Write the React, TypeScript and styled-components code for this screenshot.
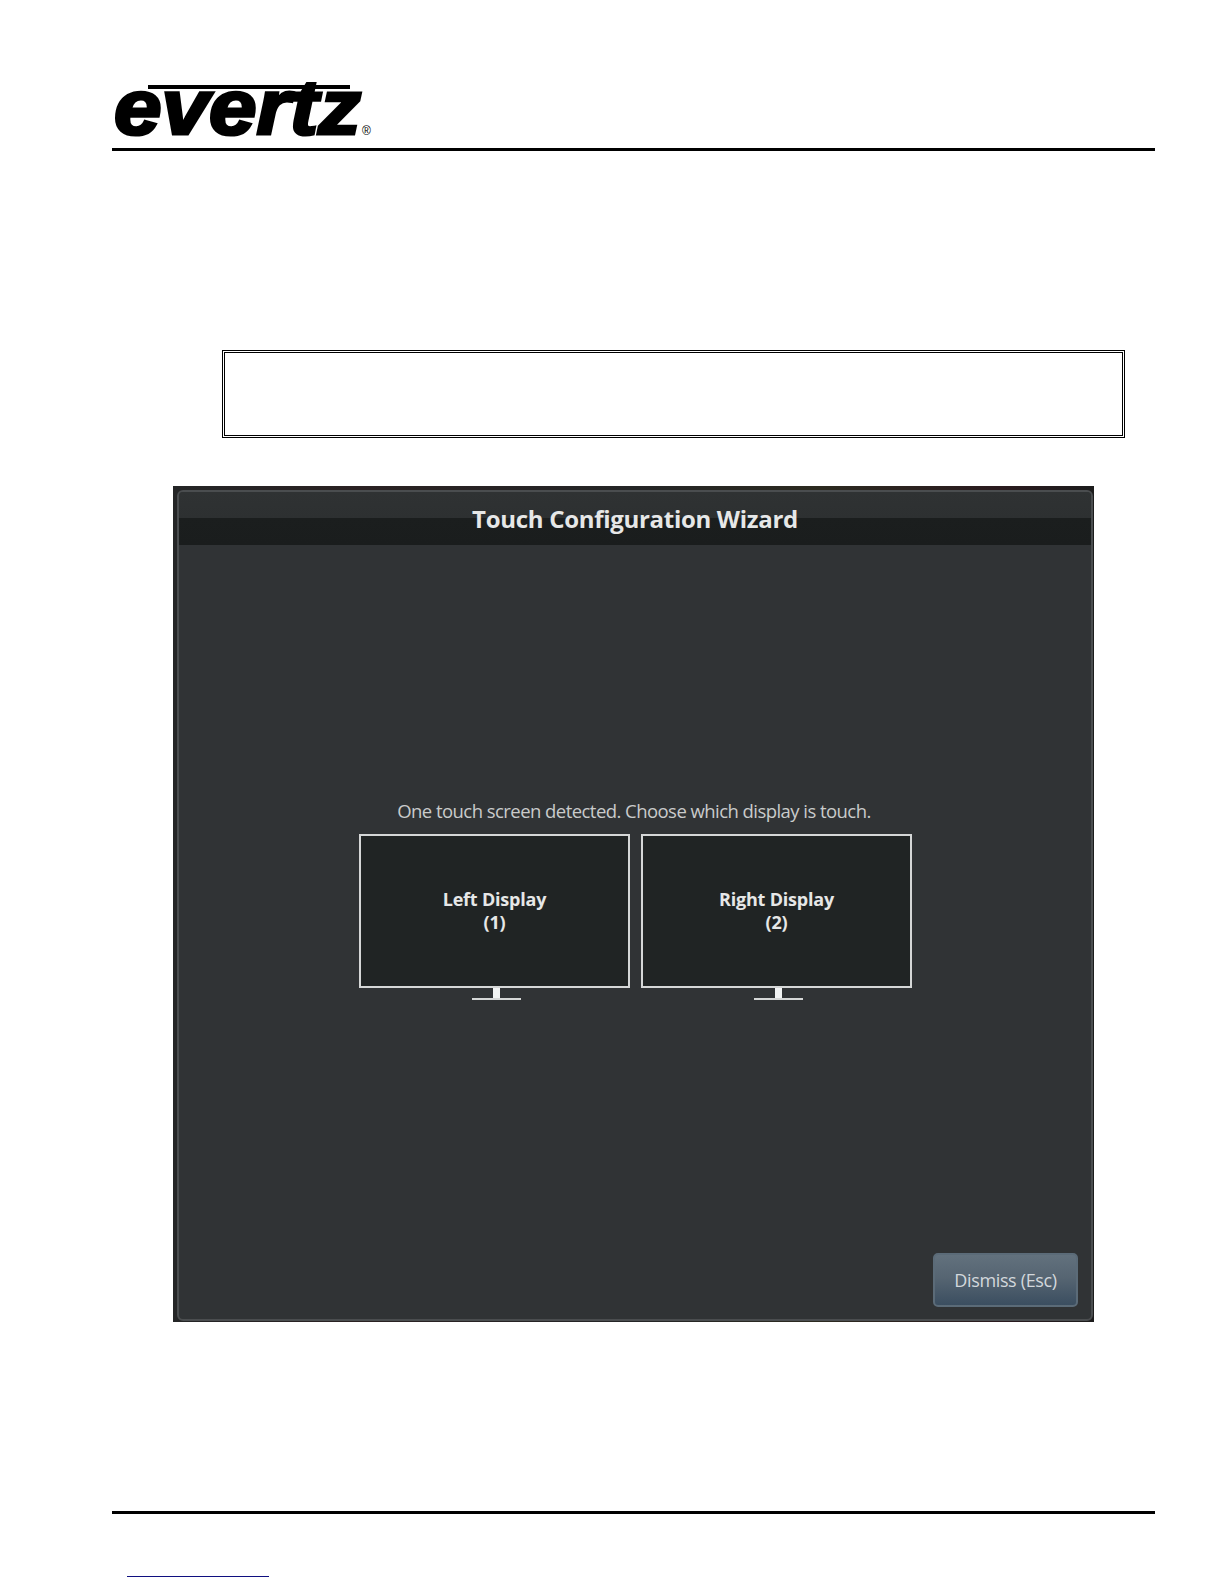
import React from 'react';
import styled, { createGlobalStyle } from 'styled-components';

const GlobalStyle = createGlobalStyle`
  html, body {
    margin: 0;
    padding: 0;
    background: #fff;
  }
`;

const Page = styled.div`
  width: 1224px;
  height: 1584px;
  overflow: hidden;
  background: #fff;
  display: flex;
  flex-direction: column;
  padding: 0 69px 0 112px;
  box-sizing: border-box;
`;

const Header = styled.header`
  height: 151px;
  box-sizing: border-box;
  padding-top: 78px;
  border-bottom: 3px solid #000;
`;

const LogoSvg = styled.svg`
  display: block;
  width: 262px;
  height: 64px;
  overflow: visible;
`;

const NoticeBox = styled.div`
  width: 903px;
  height: 88px;
  box-sizing: border-box;
  margin: 199px 0 0 110px;
  border: 3px double #000;
`;

const ScreenFrame = styled.div`
  width: 921px;
  height: 836px;
  box-sizing: border-box;
  margin: 48px 0 0 61px;
  padding: 4px 1px 1px 4px;
  background: linear-gradient(90deg, #242526 0%, #2a2122 20%, #242526 50%, #2c2a20 70%, #2a1a1e 90%, #1c1c1c 100%);
`;

const Panel = styled.div`
  height: 100%;
  box-sizing: border-box;
  display: flex;
  flex-direction: column;
  border: 2px solid #4a4d4f;
  border-radius: 6px;
  overflow: hidden;
  background: #303335;
  font-family: "Open Sans", "Noto Sans", sans-serif;
`;

const TitleBar = styled.div`
  height: 53px;
  flex: none;
  display: flex;
  align-items: center;
  justify-content: center;
  padding-bottom: 1px;
  box-sizing: border-box;
  background: linear-gradient(180deg, #2f3233 0%, #2d3031 50%, #1b1e1e 50%, #1a1d1d 100%);
  color: #e6e7e7;
  font-size: 24px;
  font-weight: 700;
  letter-spacing: -0.3px;
`;

const Body = styled.div`
  flex: 1;
  display: flex;
  flex-direction: column;
  padding: 253px 13px 12px 0;
  box-sizing: border-box;
`;

const Prompt = styled.div`
  width: 910px;
  text-align: center;
  color: #c9cbcb;
  font-size: 18.5px;
  line-height: 26px;
  letter-spacing: -0.55px;
`;

const DisplayRow = styled.div`
  display: flex;
  gap: 11px;
  margin: 10px 0 0 180px;
`;

const DisplayOption = styled.div`
  width: 271px;
  display: flex;
  flex-direction: column;
  align-items: center;
`;

const DisplayScreen = styled.div`
  width: 100%;
  height: 154px;
  box-sizing: border-box;
  border: 2px solid #d5d7d7;
  background: #202424;
  display: flex;
  flex-direction: column;
  align-items: center;
  justify-content: center;
  color: #e6e7e7;
  font-size: 18px;
  font-weight: 700;
  line-height: 23px;
  letter-spacing: -0.2px;
`;

const StandNeck = styled.div`
  width: 7px;
  height: 10px;
  margin-left: 4px;
  background: #f2f4f4;
`;

const StandBase = styled.div`
  width: 49px;
  height: 2px;
  margin-left: 4px;
  background: #d5d7d7;
`;

const Footer = styled.div`
  margin-top: auto;
  display: flex;
  justify-content: flex-end;
`;

const DismissButton = styled.button`
  width: 145px;
  height: 54px;
  box-sizing: border-box;
  padding: 0;
  border: 2px solid #5b6b78;
  border-radius: 5px;
  background: linear-gradient(180deg, #62717d 0%, #566572 45%, #3b4e60 100%);
  color: #d3d8dc;
  font-family: inherit;
  font-size: 18px;
  letter-spacing: -0.35px;
`;

const BottomRule = styled.div`
  height: 3px;
  flex: none;
  margin-top: 189px;
  background: #000;
`;

const FooterLink = styled.div`
  width: 142px;
  height: 1px;
  margin: 62px 0 0 15px;
  background: #101080;
`;

function EvertzLogo() {
  return (
    <LogoSvg viewBox="0 0 262 64" aria-label="evertz">
      <rect x="36" y="7" width="202" height="4" fill="#000" />
      <text
        x="2"
        y="56"
        fontFamily="Liberation Sans, sans-serif"
        fontStyle="italic"
        fontWeight="700"
        fontSize="77"
        textLength="247"
        lengthAdjust="spacingAndGlyphs"
        stroke="#000"
        strokeWidth="3"
      >
        evertz
      </text>
      <text x="250" y="57" fontFamily="Liberation Sans, sans-serif" fontSize="12">
        ®
      </text>
    </LogoSvg>
  );
}

function Display({ name, index }: { name: string; index: number }) {
  return (
    <DisplayOption>
      <DisplayScreen>
        <span>{name}</span>
        <span>({index})</span>
      </DisplayScreen>
      <StandNeck />
      <StandBase />
    </DisplayOption>
  );
}

export default function App() {
  return (
    <Page>
      <GlobalStyle />
      <Header>
        <EvertzLogo />
      </Header>
      <NoticeBox />
      <ScreenFrame>
        <Panel>
          <TitleBar>Touch Configuration Wizard</TitleBar>
          <Body>
            <Prompt>One touch screen detected. Choose which display is touch.</Prompt>
            <DisplayRow>
              <Display name="Left Display" index={1} />
              <Display name="Right Display" index={2} />
            </DisplayRow>
            <Footer>
              <DismissButton>Dismiss (Esc)</DismissButton>
            </Footer>
          </Body>
        </Panel>
      </ScreenFrame>
      <BottomRule />
      <FooterLink />
    </Page>
  );
}
